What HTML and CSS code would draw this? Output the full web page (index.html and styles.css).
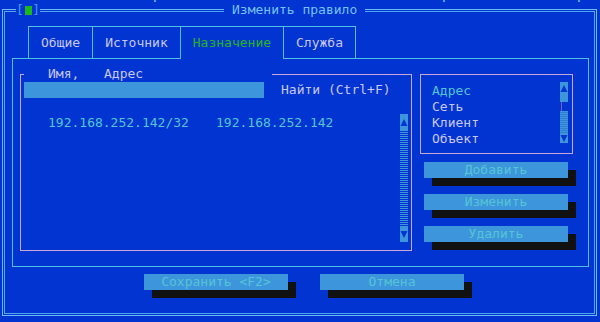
FILE: index.html
```html
<!DOCTYPE html>
<html lang="ru">
<head>
    <meta charset="UTF-8">
    <meta name="viewport" content="width=device-width, initial-scale=1.0">
    <title>Изменить правило</title>
    <link rel="stylesheet" href="styles.css">
</head>
<body>
    <div class="backdrop">
        <i class="tick tick-1"></i><i class="tick tick-2"></i><i class="tick tick-3"></i>
    </div>
    <div class="dialog">
        <div class="close">[<span class="close-box"></span>]</div>
        <div class="title">Изменить правило</div>
        <div class="dialog-inner">
            <div class="tabs">
                <div class="tab">Общие</div>
                <div class="tab">Источник</div>
                <div class="tab active">Назначение</div>
                <div class="tab">Служба</div>
            </div>
            <div class="panel">
                <div class="list-frame">
                    <div class="list-head"><span class="col-name">Имя,</span><span>Адрес</span></div>
                    <div class="search-row">
                        <div class="search-input"></div>
                        <span class="search-label">Найти (Ctrl+F)</span>
                    </div>
                    <div class="list-body">
                        <div class="rows">
                            <div class="row"><span class="col-a">192.168.252.142/32</span><span>192.168.252.142</span></div>
                        </div>
                        <div class="scrollbar">
                            <div class="sb-btn">
                                <svg width="8" height="16" viewBox="0 0 8 16"><polygon points="4,5 7.5,12 0.5,12" fill="#0234d2"/></svg>
                            </div>
                            <div class="sb-track"></div>
                            <div class="sb-btn">
                                <svg width="8" height="16" viewBox="0 0 8 16"><polygon points="0.5,5 7.5,5 4,12" fill="#0234d2"/></svg>
                            </div>
                        </div>
                    </div>
                </div>
                <div class="side">
                    <div class="type-box">
                        <ul class="types">
                            <li class="current">Адрес</li>
                            <li>Сеть</li>
                            <li>Клиент</li>
                            <li>Объект</li>
                        </ul>
                        <div class="scrollbar small">
                            <div class="sb-up">
                                <svg width="8" height="13" viewBox="0 0 8 13"><polygon points="4,3 7.5,10 0.5,10" fill="#0234d2"/></svg>
                            </div>
                            <div class="sb-thumb"></div>
                            <div class="sb-gap"></div>
                            <div class="sb-hatch"></div>
                            <div class="sb-down">
                                <svg width="8" height="9" viewBox="0 0 8 9"><polygon points="0.5,1 7.5,1 4,8" fill="#0234d2"/></svg>
                            </div>
                        </div>
                    </div>
                    <button class="btn side-btn">Добавить</button>
                    <button class="btn side-btn">Изменить</button>
                    <button class="btn side-btn">Удалить</button>
                </div>
            </div>
            <div class="actions">
                <button class="btn">Сохранить &lt;F2&gt;</button>
                <button class="btn">Отмена</button>
            </div>
        </div>
    </div>
</body>
</html>
```
FILE: styles.css
```css
body {
    margin: 0;
    width: 600px;
    height: 322px;
    overflow: hidden;
    background-color: #0234d2;
    font-family: "DejaVu Sans Mono", monospace;
    font-size: 13px;
    line-height: 16px;
    color: #c8c8f0;
}

.backdrop {
    display: flex;
    height: 3px;
}

.tick {
    width: 2px;
    height: 2px;
    background-color: #4aa8f0;
}

.tick-1 {
    margin-left: 154px;
}

.tick-2 {
    margin-left: 287px;
}

.tick-3 {
    margin-left: 133px;
}

/* double frame of the dialog */
.dialog {
    position: relative;
    box-sizing: border-box;
    width: 595px;
    height: 307px;
    margin: 6px 0 0 2px;
    padding: 1px;
    border: 1px solid #6cbcf4;
}

.dialog-inner {
    box-sizing: border-box;
    height: 100%;
    border: 1px solid #4ea8f0;
}

.title {
    position: absolute;
    top: -8px;
    left: 221px;
    padding: 0 8px;
    background-color: #0234d2;
    color: #74c2f4;
}

.close {
    position: absolute;
    top: -8px;
    left: 13px;
    width: 24px;
    background-color: #0234d2;
    color: #3c9cf0;
    display: flex;
    align-items: center;
}

.close-box {
    display: inline-block;
    width: 9px;
    height: 9px;
    margin: 0 0 0 1px;
    background-color: #1cb81c;
}

/* tabs */
.tabs {
    display: flex;
    margin: 14px 0 0 23px;
}

.tab {
    height: 31px;
    line-height: 31px;
    padding: 0 12px;
    border: 1px solid #50c0e4;
    border-bottom: none;
    margin-left: -1px;
    color: #c8c8ec;
}

.tab:first-child {
    margin-left: 0;
}

.tab.active {
    position: relative;
    z-index: 1;
    height: 32px;
    margin-bottom: -1px;
    background-color: #0234d2;
    color: #22b522;
}

.panel {
    box-sizing: border-box;
    display: flex;
    align-items: flex-start;
    width: 577px;
    height: 209px;
    margin-left: 7px;
    padding: 15px 0 0 7px;
    border: 1px solid #50c0e4;
}

/* address list */
.list-frame {
    box-sizing: border-box;
    width: 392px;
    border: 1px solid #c8a8dc;
}

.list-head {
    width: 224px;
    height: 16px;
    margin: -9px 0 0 3px;
    padding-left: 24px;
    background-color: #0234d2;
}

.col-name {
    display: inline-block;
    width: 56px;
}

.search-row {
    display: flex;
    height: 16px;
    margin-left: 3px;
}

.search-input {
    width: 240px;
    background-color: #3d96dc;
}

.search-label {
    margin-left: 17px;
}

.list-body {
    display: flex;
    height: 128px;
    margin: 16px 0 8px 0;
}

.rows {
    flex: 1;
    padding: 1px 0 0 27px;
    color: #52c6d0;
}

.col-a {
    display: inline-block;
    width: 168px;
}

.scrollbar {
    display: flex;
    flex-direction: column;
    width: 8px;
    margin-right: 3px;
}

.sb-btn {
    height: 16px;
    background-color: #3d96dc;
}

.sb-btn svg,
.small svg {
    display: block;
}

.sb-track {
    flex: 1;
    background: repeating-linear-gradient(#3d96dc 0 1px, #0234d2 1px 2px);
}

/* type list and side buttons */
.side {
    margin-left: 8px;
}

.type-box {
    box-sizing: border-box;
    display: flex;
    width: 153px;
    border: 1px solid #c8a8dc;
}

.types {
    flex: 1;
    list-style: none;
    margin: 0;
    padding: 8px 0 6px 11px;
}

.types .current {
    color: #52c6d0;
}

.scrollbar.small {
    height: 61px;
    margin: 7px 4px 0 0;
}

.sb-up {
    height: 13px;
    background-color: #3d96dc;
}

.sb-thumb {
    height: 7px;
    background-color: #3d96dc;
}

.sb-gap {
    height: 9px;
    margin-left: 1px;
    border-left: 1px solid #7a5cc0;
}

.sb-hatch {
    height: 23px;
    background: repeating-linear-gradient(#3d96dc 0 1px, #2f80d0 1px 2px);
}

.sb-down {
    height: 9px;
    background-color: #3d96dc;
}

.btn {
    display: block;
    width: 144px;
    height: 16px;
    padding: 0;
    border: none;
    background-color: #3d96dc;
    color: #56c4d4;
    font-family: inherit;
    font-size: 13px;
    line-height: 16px;
    box-shadow: 8px 8px 0 #111111;
}

.side-btn {
    margin: 16px 0 0 4px;
}

.side-btn:first-of-type {
    margin-top: 8px;
}

.actions {
    display: flex;
    gap: 32px;
    margin-top: 7px;
    padding-left: 139px;
}
```
